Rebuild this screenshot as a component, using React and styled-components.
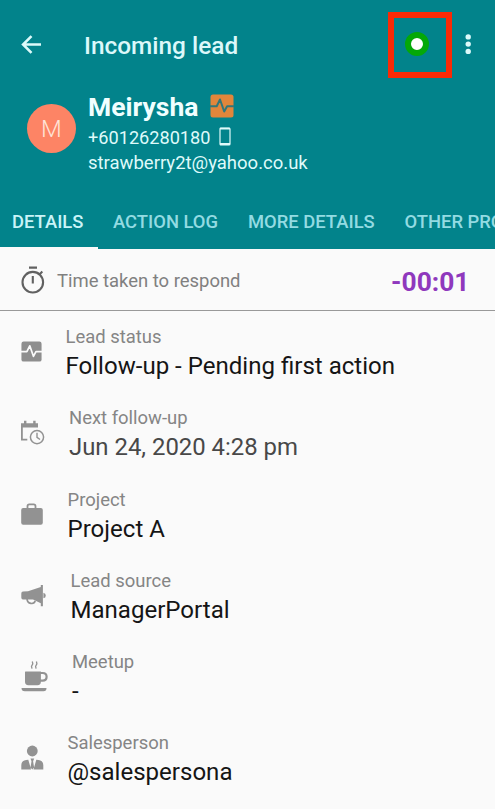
import React from 'react';
import styled, { createGlobalStyle } from 'styled-components';

const Global = createGlobalStyle`
  * { box-sizing: border-box; }
  html, body { margin: 0; }
  body {
    width: 495px;
    height: 809px;
    overflow: hidden;
    background: #fafafa;
    font-family: Roboto, sans-serif;
  }
  svg { display: block; flex: none; }
`;

const Screen = styled.main`
  width: 495px;
  height: 809px;
  overflow: hidden;
  background: #fafafa;
`;

const Header = styled.header`
  display: flex;
  flex-direction: column;
  height: 249px;
  background: #02838b;
`;

const Toolbar = styled.div`
  display: flex;
  align-items: center;
  height: 90px;
  padding-left: 20px;
`;

const Title = styled.h1`
  flex: 1;
  margin: 1px 0 0 42px;
  font-size: 24.4px;
  font-weight: 500;
  line-height: 30px;
  color: #dcf8fa;
`;

const StatusFrame = styled.div`
  display: flex;
  align-items: center;
  justify-content: center;
  width: 64px;
  height: 66px;
  margin-right: 12px;
  padding-right: 6px;
  padding-bottom: 2px;
  border: 6px solid #fa2a05;
`;

const StatusDot = styled.span`
  width: 24px;
  height: 24px;
  border: 6px solid #04a808;
  border-radius: 50%;
  background: #fff;
`;

const MenuButton = styled.div`
  width: 31px;
`;

const Contact = styled.section`
  display: flex;
  height: 104px;
  padding-left: 27px;
`;

const Avatar = styled.div`
  display: flex;
  align-items: center;
  justify-content: center;
  width: 49px;
  height: 49px;
  margin: 14px 12px 0 0;
  border-radius: 50%;
  background: #fd8465;
  color: #ffe3d6;
  font-size: 24px;
  font-weight: 300;
`;

const ContactLines = styled.div`
  display: flex;
  flex-direction: column;
`;

const NameLine = styled.div`
  display: flex;
  align-items: center;
  gap: 12px;
  height: 34px;
  color: #f0ffff;
  font-size: 26.5px;
  font-weight: 700;
  line-height: 34px;

  svg { margin-bottom: 3px; }
`;

const ContactLine = styled.div`
  display: flex;
  align-items: center;
  gap: 9px;
  height: 25px;
  padding-top: ${(p) => p.$drop}px;
  color: #dffafa;
  font-size: ${(p) => p.$size}px;
  line-height: 25px;

  svg { margin-bottom: 2px; }
`;

const Tabs = styled.nav`
  display: flex;
  height: 55px;
  overflow: hidden;
`;

const Tab = styled.div`
  flex: none;
  width: ${(p) => p.$width}px;
  padding: 14px 0 0 ${(p) => p.$inset}px;
  border-bottom: 2px solid ${(p) => (p.$active ? '#fafafa' : 'transparent')};
  color: ${(p) => (p.$active ? '#c9f4f8' : '#93dbe2')};
  font-size: 18.4px;
  font-weight: 500;
  line-height: 27px;
  white-space: nowrap;
`;

const Response = styled.section`
  display: flex;
  align-items: center;
  height: 62px;
  padding: 1px 25.5px 0 20px;
  border-bottom: 1px solid #999;
`;

const ResponseLabel = styled.span`
  flex: 1;
  margin: 2px 0 0 11px;
  color: #808080;
  font-size: 18.45px;
  line-height: 26px;
`;

const Timer = styled.span`
  margin-top: 3px;
  color: #8f38bd;
  font-size: 26.4px;
  font-weight: 700;
  line-height: 32px;
`;

const Details = styled.dl`
  display: grid;
  grid-auto-rows: 81.2px;
  margin: 0;
  padding-top: 13.2px;
`;

const Row = styled.div`
  display: grid;
  grid-template-columns: ${(p) => p.$indent}px 1fr;
`;

const RowIcon = styled.div`
  padding: ${(p) => p.$top}px 0 0 ${(p) => p.$left || 20}px;
`;

const Label = styled.dt`
  color: #858585;
  font-size: 18.45px;
  line-height: 26px;
`;

const Value = styled.dd`
  margin: 0;
  color: ${(p) => (p.$muted ? '#484848' : '#151515')};
  font-size: ${(p) => (p.$muted ? 23.9 : 24.05)}px;
  line-height: 32px;
`;

const BackIcon = () => (
  <svg width="22" height="20" viewBox="0 0 22 20" fill="none" stroke="#dcfafa" strokeWidth="2.6">
    <path d="M21 9.5H3M11.5 1.2L3.1 9.5l8.4 8.3" />
  </svg>
);

const MoreIcon = () => (
  <svg width="8" height="22" viewBox="0 0 8 22" fill="#dcfafa">
    <circle cx="4.2" cy="2.9" r="2.7" />
    <circle cx="4.2" cy="10.1" r="2.7" />
    <circle cx="4.2" cy="17.4" r="2.7" />
  </svg>
);

const PulseIcon = ({ size, fill, line }) => (
  <svg width={size} height={size} viewBox="0 0 24 24">
    <rect x=".5" y=".5" width="23" height="23" rx="2.5" fill={fill} />
    <path d="M0 12.2h6.7L10 5.5l4.2 12 2.9-5.3H24" fill="none" stroke={line} strokeWidth="2" strokeLinejoin="round" />
  </svg>
);

const PhoneIcon = () => (
  <svg width="12" height="19" viewBox="0 0 12 19" fill="none" stroke="#dffafa">
    <rect x="1" y="1" width="10" height="17" rx="1" strokeWidth="1.2" />
    <path d="M1 1.7h10M1 17h10" strokeWidth="1.8" />
  </svg>
);

const StopwatchIcon = () => (
  <svg width="26" height="28" viewBox="0 0 26 28" fill="none" stroke="#616161" strokeWidth="2.1">
    <circle cx="12.8" cy="16.2" r="10.3" />
    <path d="M9 1.6h8M12.8 10v7.5M19.5 8.4l2.8-2.8" />
  </svg>
);

const CalendarClockIcon = () => (
  <svg width="25" height="25" viewBox="0 0 25 25" fill="none" stroke="#929292">
    <path d="M1 3.2h17v4.3H1zM4 .8h2.4v3H4zM13.2.8h2.4v3h-2.4z" fill="#929292" stroke="none" />
    <path d="M1.9 4v15.6h5.4" strokeWidth="1.8" />
    <circle cx="17" cy="17.1" r="6.6" strokeWidth="1.5" />
    <path d="M17 12.8v4.5l3 2.2" strokeWidth="1.4" />
  </svg>
);

const BriefcaseIcon = () => (
  <svg width="24" height="23" viewBox="0 0 24 23">
    <path d="M7.5 6V3.2c0-1.2.6-1.8 1.8-1.8h4.4c1.2 0 1.8.6 1.8 1.8V6" fill="none" stroke="#929292" strokeWidth="1.8" />
    <rect x="1.2" y="5" width="21.6" height="16.8" rx="2" fill="#929292" />
  </svg>
);

const MegaphoneIcon = () => (
  <svg width="26" height="23" viewBox="0 0 26 23" fill="#929292">
    <path d="M3 7.6L8 7.2 20.8 3V1h2.1v21.3h-2.1v-3L13 15.4H3Q1.3 15.4 1.3 13.4V9.6Q1.3 7.6 3 7.6zM23.4 8.7q2.4.4 2.4 2.8t-2.4 2.8z" />
    <path d="M7 14.6c.2 5.8 7.2 6.2 8.2 2.2" fill="none" stroke="#929292" strokeWidth="1.6" />
  </svg>
);

const CupIcon = () => (
  <svg width="29" height="33" viewBox="0 0 29 33" fill="#929292">
    <path d="M5.5 11.5h15.4v10.3q0 3.4-3.4 3.4H8.4q-3.4 0-3.4-3.4V12q0-.5.5-.5zM1.5 28h25q0 3.2-3 3.2H4.8q-3.3 0-3.3-3.2z" />
    <path d="M20 13h2.7c5.2 0 5.2 7.7 0 7.7H20" fill="none" stroke="#929292" strokeWidth="2.2" />
    <path d="M12 8.7l-.5-2.4 1.3-2.4-.5-2.4M16.1 8.7l-.5-2.4 1.3-2.4-.5-2.4" fill="none" stroke="#929292" strokeWidth="1.3" />
  </svg>
);

const SalespersonIcon = () => (
  <svg width="25" height="27" viewBox="0 0 25 27" fill="#929292">
    <circle cx="12.3" cy="7" r="5.4" />
    <path d="M1.3 25.5v-4.2q0-4.6 4.8-5.3l2.2-.3 2.8 9.8zM23.3 25.5v-4.2q0-4.6-4.8-5.3l-2.2-.3-2.8 9.8zM10.5 14.6h3.7l-1.1 2.7 1 6.2-1.8 2-1.8-2 1-6.2z" />
  </svg>
);

const rows = [
  { label: 'Lead status', value: 'Follow-up - Pending first action', indent: 65.5, top: 17, left: 20.5, icon: <PulseIcon size={21} fill="#8e8e8e" line="#fafafa" /> },
  { label: 'Next follow-up', value: 'Jun 24, 2020 4:28 pm', indent: 69, top: 14.5, muted: true, icon: <CalendarClockIcon /> },
  { label: 'Project', value: 'Project A', indent: 67.5, top: 16, icon: <BriefcaseIcon /> },
  { label: 'Lead source', value: 'ManagerPortal', indent: 70.5, top: 16, icon: <MegaphoneIcon /> },
  { label: 'Meetup', value: '-', indent: 72, top: 11, icon: <CupIcon /> },
  { label: 'Salesperson', value: '@salespersona', indent: 67.5, top: 14, icon: <SalespersonIcon /> },
];

export default function App() {
  return (
    <Screen>
      <Global />
      <Header>
        <Toolbar>
          <BackIcon />
          <Title>Incoming lead</Title>
          <StatusFrame><StatusDot /></StatusFrame>
          <MenuButton><MoreIcon /></MenuButton>
        </Toolbar>
        <Contact>
          <Avatar>M</Avatar>
          <ContactLines>
            <NameLine>Meirysha <PulseIcon size={24} fill="#e1863b" line="#31777a" /></NameLine>
            <ContactLine $size={18.15} $drop={1}>+60126280180 <PhoneIcon /></ContactLine>
            <ContactLine $size={18.5} $drop={3}>strawberry2t@yahoo.co.uk</ContactLine>
          </ContactLines>
        </Contact>
        <Tabs>
          <Tab $active $width={98} $inset={12}>DETAILS</Tab>
          <Tab $width={135} $inset={15}>ACTION LOG</Tab>
          <Tab $width={157} $inset={15}>MORE DETAILS</Tab>
          <Tab $width={190} $inset={14.5}>OTHER PROJECTS</Tab>
        </Tabs>
      </Header>
      <Response>
        <StopwatchIcon />
        <ResponseLabel>Time taken to respond</ResponseLabel>
        <Timer>-00:01</Timer>
      </Response>
      <Details>
        {rows.map((row) => (
          <Row key={row.label} $indent={row.indent}>
            <RowIcon $top={row.top} $left={row.left}>{row.icon}</RowIcon>
            <div>
              <Label>{row.label}</Label>
              <Value $muted={row.muted}>{row.value}</Value>
            </div>
          </Row>
        ))}
      </Details>
    </Screen>
  );
}
